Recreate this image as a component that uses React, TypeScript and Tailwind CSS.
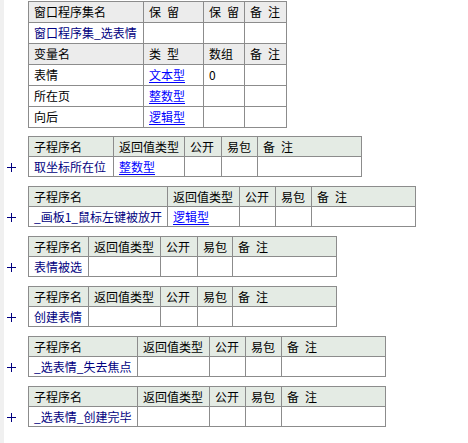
import React from 'react';

// Sub-program tables: name, return type, grid column widths
const subs = [
  { name: '取坐标所在位', ret: '整数型', cols: 'grid-cols-[85px_71px_37px_36px_104px]' },
  { name: '_画板1_鼠标左键被放开', ret: '逻辑型', cols: 'grid-cols-[139px_72px_36px_36px_104px]' },
  { name: '表情被选', ret: '', cols: 'grid-cols-[60px_72px_37px_35px_104px]' },
  { name: '创建表情', ret: '', cols: 'grid-cols-[60px_72px_37px_35px_104px]' },
  { name: '_选表情_失去焦点', ret: '', cols: 'grid-cols-[109px_72px_36px_36px_104px]' },
  { name: '_选表情_创建完毕', ret: '', cols: 'grid-cols-[109px_72px_36px_36px_104px]' },
];

const vars = [
  { name: '表情', type: '文本型', arr: '0' },
  { name: '所在页', type: '整数型', arr: '' },
  { name: '向后', type: '逻辑型', arr: '' },
];

function Cell({ children, className = '' }: { children?: React.ReactNode; className?: string }) {
  return (
    <div className={`flex items-center border-r border-b border-[#8c8c8c] pl-[5px] whitespace-nowrap ${className}`}>
      {children}
    </div>
  );
}

function Plus() {
  return (
    <svg width="9" height="9" viewBox="0 0 9 9">
      <path d="M0 4.5H9M4.5 0V9" stroke="#000080" strokeWidth="1" />
    </svg>
  );
}

export default function App() {
  return (
    <div
      className="flex min-h-[443px] bg-white text-[12px] text-black"
      style={{ fontFamily: '"Noto Sans CJK SC", "Noto Sans", sans-serif' }}
    >
      <div className="w-[4px] shrink-0 bg-[#f0f0f0]" />
      <div className="pt-[1px]">
        {/* Window program set */}
        <div className="ml-[24px] grid w-max grid-cols-[115px_60px_41px_42px] auto-rows-[21px] border-l border-t border-[#8c8c8c]">
          <Cell className="bg-[#ececec]">窗口程序集名</Cell>
          <Cell className="bg-[#ececec]">保{'\u2002'}留</Cell>
          <Cell className="bg-[#ececec]">保{'\u2002'}留</Cell>
          <Cell className="bg-[#ececec]">备{'\u2002'}注</Cell>

          <Cell className="text-[#000080]">窗口程序集_选表情</Cell>
          <Cell />
          <Cell />
          <Cell />

          <Cell className="bg-[#ececec]">变量名</Cell>
          <Cell className="bg-[#ececec]">类{'\u2002'}型</Cell>
          <Cell className="bg-[#ececec]">数组</Cell>
          <Cell className="bg-[#ececec]">备{'\u2002'}注</Cell>

          {vars.map(v => (
            <React.Fragment key={v.name}>
              <Cell>{v.name}</Cell>
              <Cell>
                <span className="text-[#0000ff] underline underline-offset-2">{v.type}</span>
              </Cell>
              <Cell>{v.arr}</Cell>
              <Cell />
            </React.Fragment>
          ))}
        </div>

        {/* Sub-programs */}
        <div className="mt-[8px] flex flex-col gap-[9px]">
          {subs.map(s => (
            <div key={s.name} className="flex">
              <div className="w-[24px] pt-[21px]">
                <div className="flex h-[20px] items-center pl-[3px]">
                  <Plus />
                </div>
              </div>
              <div className={`grid w-max ${s.cols} auto-rows-[20px] border-l border-t border-[#8c8c8c]`}>
                <Cell className="bg-[#e4ebe4]">子程序名</Cell>
                <Cell className="bg-[#e4ebe4]">返回值类型</Cell>
                <Cell className="bg-[#e4ebe4]">公开</Cell>
                <Cell className="bg-[#e4ebe4]">易包</Cell>
                <Cell className="bg-[#e4ebe4]">备{'\u2002'}注</Cell>

                <Cell className="text-[#000080]">{s.name}</Cell>
                <Cell>
                  {s.ret && <span className="text-[#0000ff] underline underline-offset-2">{s.ret}</span>}
                </Cell>
                <Cell />
                <Cell />
                <Cell />
              </div>
            </div>
          ))}
        </div>
      </div>
    </div>
  );
}
